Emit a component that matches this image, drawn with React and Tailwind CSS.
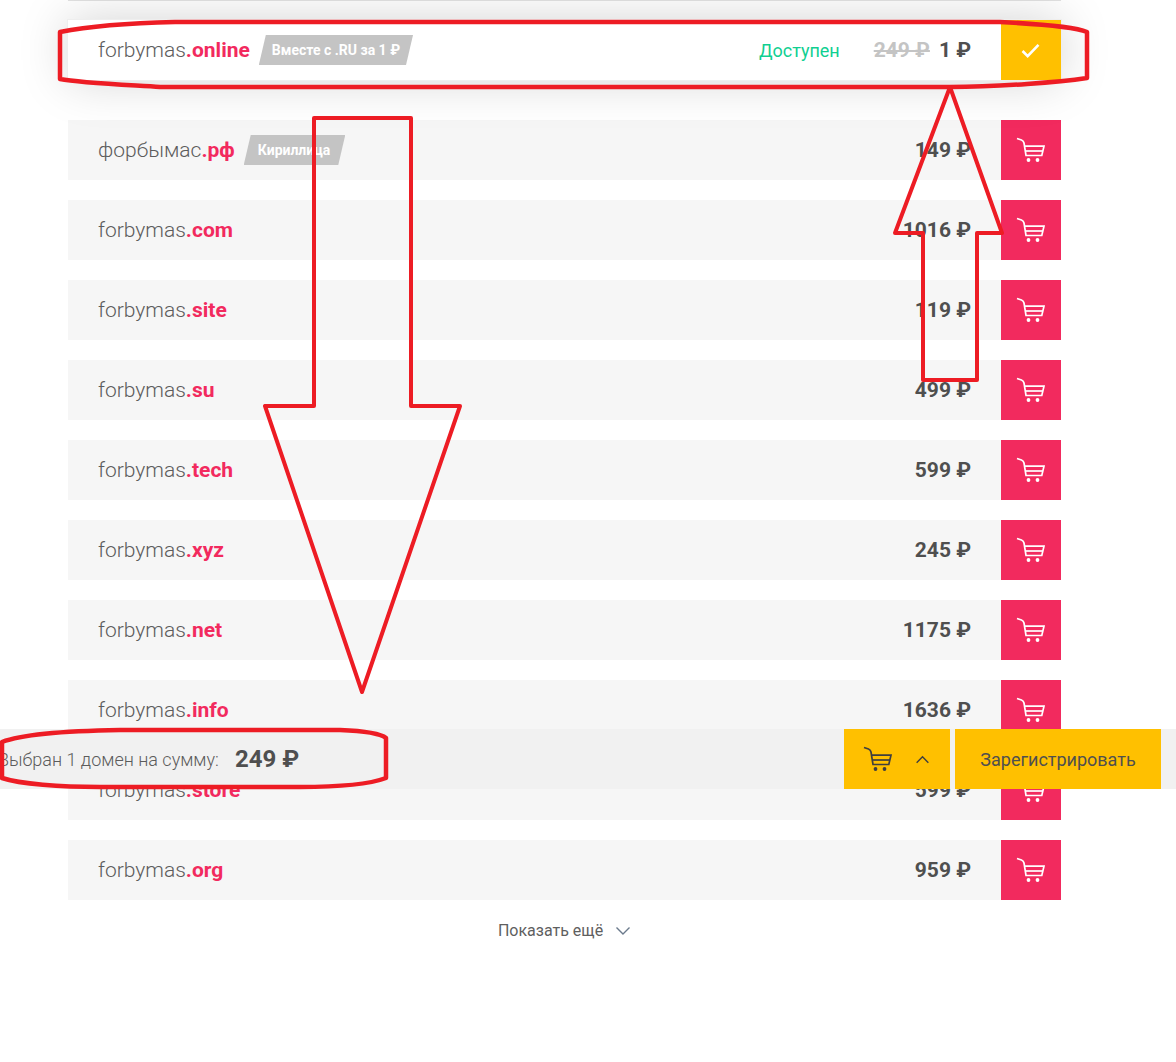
import React from "react";

const DOMAINS = [
  { tld: ".com", price: "1016 ₽" },
  { tld: ".site", price: "119 ₽" },
  { tld: ".su", price: "499 ₽" },
  { tld: ".tech", price: "599 ₽" },
  { tld: ".xyz", price: "245 ₽" },
  { tld: ".net", price: "1175 ₽" },
  { tld: ".info", price: "1636 ₽" },
  { tld: ".store", price: "599 ₽" },
  { tld: ".org", price: "959 ₽" },
];

function CartIcon({ className }) {
  return (
    <svg viewBox="0 0 30 26" fill="none" stroke="currentColor" strokeWidth="1.7" className={className}>
      <path d="M1 1.5 L5.5 3 Q7.6 3.8 8 6 L10 18.5 H25.8 L28 9.2 H8.6" />
      <path d="M9.4 14 H27" />
      <circle cx="12.5" cy="23" r="1.9" fill="currentColor" stroke="none" />
      <circle cx="21.5" cy="23" r="1.9" fill="currentColor" stroke="none" />
    </svg>
  );
}

function Badge({ children, className }) {
  return (
    <span className={`ml-[9px] h-[30px] flex items-center bg-[#c4c4c4] text-white text-[14px] font-bold [clip-path:polygon(7px_0,100%_0,calc(100%-7px)_100%,0_100%)] ${className}`}>
      {children}
    </span>
  );
}

function DomainName({ name, tld }) {
  return (
    <span className="pt-[2px] text-[21px] font-light text-[#5c5c5c]">
      {name}
      <span className="font-bold text-[#f22a5e]">{tld}</span>
    </span>
  );
}

function Row({ name = "forbymas", tld, price, badge }) {
  return (
    <div className="h-[60px] flex items-center bg-[#f6f6f6] pl-[30px]">
      <DomainName name={name} tld={tld} />
      {badge && <Badge className="pl-[14px] pr-[15px]">{badge}</Badge>}
      <span className="ml-auto mr-[30px] pt-[2px] text-[21px] font-bold text-[#4f4f4f]">{price}</span>
      <button className="w-[60px] h-[60px] flex items-center justify-center bg-[#f22a5e] text-white">
        <CartIcon className="w-[30px] h-[26px]" />
      </button>
    </div>
  );
}

// The hand-drawn red marks on top of the screenshot
function Annotations() {
  return (
    <svg className="absolute left-0 top-0 pointer-events-none" width="1176" height="1062" fill="none" stroke="#ed1c24" strokeWidth="4" strokeLinejoin="round">
      <path strokeWidth="4.5" d="M60 32 C90 26 130 23 175 22 L1000 22 C1040 24 1075 27 1087 32 L1087 78 C1060 82 1000 87 950 87 L160 87 C130 85 80 83 60 79 Z" />
      <path d="M314 118 H411 V406 H460 L362 692 L265 406 H314 Z" />
      <path d="M950 87 L1002 233 H977 V380 H923 V233 H895 Z" />
      <path strokeWidth="4.5" d="M2 742 C20 735 60 731 120 730 L340 730 C365 731 380 733 386 738 L386 778 C370 784 340 787 300 787 L100 787 C60 787 20 784 2 778 Z" />
    </svg>
  );
}

export default function App() {
  return (
    <div className="relative h-[1062px] overflow-hidden bg-white font-['Roboto',sans-serif]">
      <div className="ml-[68px] w-[993px]">
        {/* bottom edge of the row scrolled off the top */}
        <div className="h-px mb-[19px] bg-[#e2e2e2]" />

        <div className="relative h-[60px] flex items-center bg-white pl-[30px] shadow-[0_0_0_1px_#eeeeee,0_0_50px_rgba(0,0,0,0.18)] mb-[40px]">
          <DomainName name="forbymas" tld=".online" />
          <Badge className="px-[13px]">Вместе с .RU за 1 ₽</Badge>
          <span className="ml-auto text-[18px] text-[#10cf91]">Доступен</span>
          <span className="ml-[34px] pt-[2px] text-[21px] font-bold text-[#c4c4c4] line-through">249 ₽</span>
          <span className="ml-[9px] mr-[30px] pt-[2px] text-[21px] font-bold text-[#4f4f4f]">1 ₽</span>
          <button className="w-[60px] h-[60px] pr-[2px] flex items-center justify-center bg-[#ffc000] text-white">
            <svg viewBox="0 0 20 16" width="19" height="15" fill="none" stroke="currentColor" strokeWidth="2.8">
              <path d="M1.5 8.5 L7 14 L18.5 2" />
            </svg>
          </button>
        </div>

        <div className="flex flex-col gap-[20px]">
          <Row name="форбымас" tld=".рф" price="149 ₽" badge="Кириллица" />
          {DOMAINS.map((d) => (
            <Row key={d.tld} tld={d.tld} price={d.price} />
          ))}
        </div>

        <div className="mt-[19px] flex items-center justify-center gap-[12px] text-[16px] text-[#5f5f5f]">
          <span>Показать ещё</span>
          <svg viewBox="0 0 16 10" width="16" height="10" fill="none" stroke="#6b7a8c" strokeWidth="1.4">
            <path d="M1.5 1.5 L8 8 L14.5 1.5" />
          </svg>
        </div>
      </div>

      {/* Sticky bar over the list */}
      <div className="absolute left-0 right-0 top-[729px] h-[60px] flex items-center bg-[#f1f1f1]">
        <span className="-ml-[2px] text-[18px] font-light text-[#5c5c5c]">Выбран 1 домен на сумму:</span>
        <span className="ml-[16px] text-[24px] font-bold text-[#4f4f4f]">249 ₽</span>
        <div className="ml-auto mr-[15px] flex gap-[5px] h-[60px]">
          <button className="w-[106px] pr-[2px] flex items-center justify-center gap-[22px] bg-[#ffc000] text-[#3f3f3f]">
            <CartIcon className="w-[30px] h-[26px]" />
            <svg viewBox="0 0 16 10" width="15" height="9" fill="none" stroke="currentColor" strokeWidth="1.6">
              <path d="M1.5 8.5 L8 2 L14.5 8.5" />
            </svg>
          </button>
          <button className="w-[206px] bg-[#ffc000] text-[18px] text-[#4f4f4f]">Зарегистрировать</button>
        </div>
      </div>

      <Annotations />
    </div>
  );
}
